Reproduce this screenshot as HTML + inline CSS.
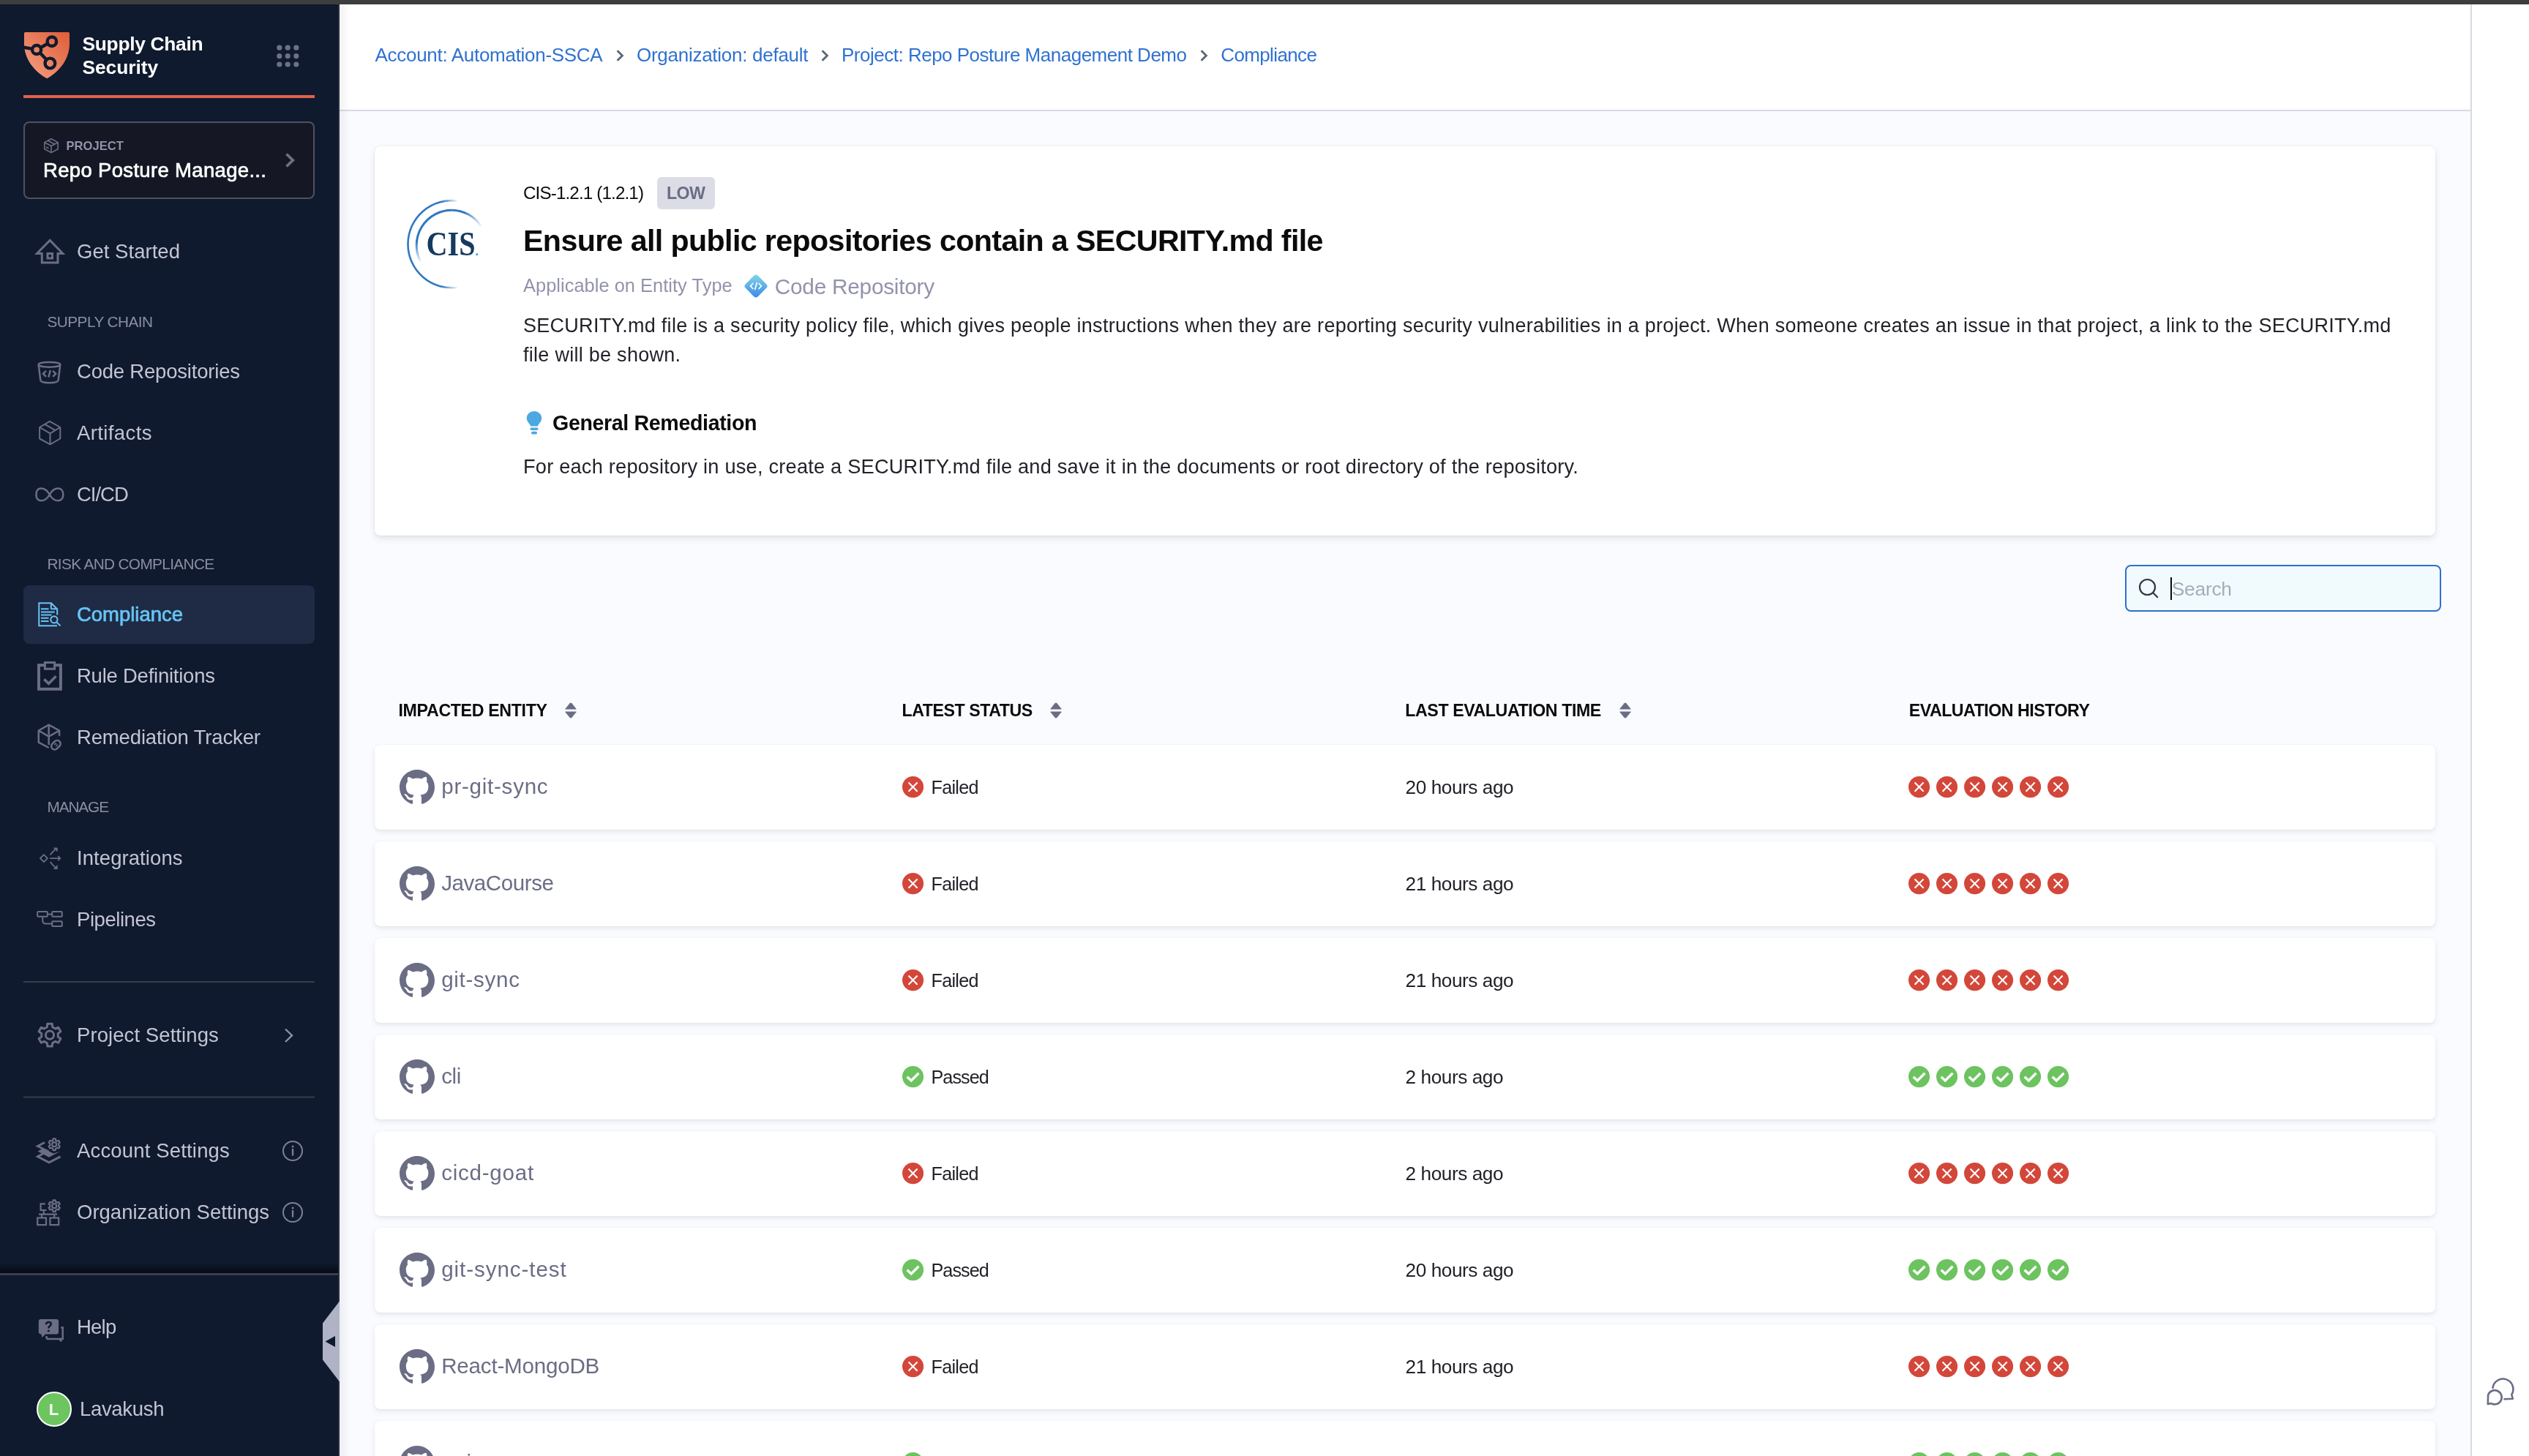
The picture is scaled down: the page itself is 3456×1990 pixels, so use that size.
<!DOCTYPE html><html><head><meta charset="utf-8"><title>Compliance</title><style>
*{margin:0;padding:0;box-sizing:border-box}
html,body{width:3456px;height:1990px;overflow:hidden;background:#fff}
#root{zoom:2;will-change:transform;position:relative;width:1728px;height:995px;overflow:hidden;font-family:"Liberation Sans",sans-serif;background:#fafbfe}
.t{position:absolute;white-space:nowrap;line-height:1}
@media (max-width: 2400px){html,body{width:1728px;height:995px}#root{zoom:1}}
</style></head><body><div id="root"><div style="position:absolute;left:0px;top:0px;width:1728px;height:3px;background:#3d3d3d;z-index:5"></div><div style="position:absolute;left:232px;top:0px;width:1456px;height:75px;background:#ffffff"></div><div style="position:absolute;left:232px;top:75px;width:1456px;height:1px;background:#d9dae5"></div><div style="position:absolute;left:232px;top:3px;width:7px;height:992px;background:linear-gradient(to right, rgba(20,20,40,0.06), rgba(20,20,40,0))"></div><div style="position:absolute;left:1688px;top:0px;width:40px;height:995px;background:#ffffff"></div><div style="position:absolute;left:1688px;top:3px;width:1px;height:992px;background:#d8d9e3"></div><svg style="position:absolute;left:1697px;top:939px;" width="24" height="24" viewBox="3394 1878 48 48"><path d="M3406.5,1897 A14,14 0 1 1 3432.3,1906 L3433.8,1911.8 L3422.5,1912.3" stroke="#6b6d85" stroke-width="2.6" fill="none" stroke-linejoin="round" stroke-linecap="round"/><path d="M3400.1,1906.5 A9.6,9.6 0 1 1 3404.3,1918.1 L3399.8,1919 Z" stroke="#6b6d85" stroke-width="2.6" fill="none" stroke-linejoin="round"/></svg><svg style="position:absolute;left:420.5px;top:34px;" width="6" height="8" viewBox="0 0 12 16"><path d="M2.6,1.3 L9.4,8 L2.6,14.7" stroke="#5b6878" stroke-width="2.9" fill="none"/></svg><svg style="position:absolute;left:560.5px;top:34px;" width="6" height="8" viewBox="0 0 12 16"><path d="M2.6,1.3 L9.4,8 L2.6,14.7" stroke="#5b6878" stroke-width="2.9" fill="none"/></svg><svg style="position:absolute;left:819.25px;top:34px;" width="6" height="8" viewBox="0 0 12 16"><path d="M2.6,1.3 L9.4,8 L2.6,14.7" stroke="#5b6878" stroke-width="2.9" fill="none"/></svg><div style="position:absolute;left:256px;top:100px;width:1408px;height:266px;background:#fff;border-radius:4px;box-shadow:0 0 1px rgba(40,41,61,0.08),0 2px 4px rgba(96,97,112,0.16)"></div><svg style="position:absolute;left:274px;top:132px;" width="64" height="68" viewBox="548 264 128 136"><defs><linearGradient id="cg1" x1="0" y1="0" x2="1" y2="0"><stop offset="0" stop-color="#2f78c0"/><stop offset="0.8" stop-color="#3d8fd0"/><stop offset="1" stop-color="#3d8fd0" stop-opacity="0"/></linearGradient></defs><defs><linearGradient id="ga1" gradientUnits="userSpaceOnUse" x1="585" y1="0" x2="626" y2="0"><stop offset="0.45" stop-color="#2f78c0"/><stop offset="1" stop-color="#2f78c0" stop-opacity="0"/></linearGradient><linearGradient id="ga2" gradientUnits="userSpaceOnUse" x1="0" y1="300" x2="0" y2="360"><stop offset="0.5" stop-color="#2f78c0"/><stop offset="1" stop-color="#2f78c0" stop-opacity="0"/></linearGradient><linearGradient id="ga3" gradientUnits="userSpaceOnUse" x1="615" y1="0" x2="659" y2="0"><stop offset="0.45" stop-color="#2f78c0"/><stop offset="1" stop-color="#2f78c0" stop-opacity="0"/></linearGradient></defs><path d="M625.5,274.7 A59.6,59.6 0 1 0 625.5,392.7" stroke="url(#ga1)" stroke-width="2.6" fill="none"/><path d="M617.2,287.2 A48,48 0 0 0 574.8,357.7" stroke="url(#ga2)" stroke-width="3" fill="none"/><path d="M657.5,309.1 A48,48 0 0 0 617.2,287.2" stroke="url(#ga3)" stroke-width="3" fill="none"/><rect x="672" y="264" width="4" height="136" fill="#fff"/><text x="582.5" y="349.1" font-family="Liberation Serif" font-weight="700" font-size="45.5" fill="#163a5f" textLength="67" lengthAdjust="spacingAndGlyphs">CIS</text><circle cx="651.8" cy="347.7" r="1.6" fill="#5aa0d8"/></svg><div style="position:absolute;left:449px;top:121px;width:39.25px;height:21.75px;background:#dcdce6;border-radius:3px"></div><svg style="position:absolute;left:508.3px;top:187.4px;" width="16" height="16" viewBox="0 0 32 32"><defs><linearGradient id="dg" x1="0" y1="0" x2="1" y2="1"><stop offset="0" stop-color="#86d8e6"/><stop offset="1" stop-color="#3a86ea"/></linearGradient></defs><rect x="4" y="4" width="24" height="24" rx="4" transform="rotate(45 16 16)" fill="url(#dg)"/><path d="M12.3,12 L8.6,16 L12.3,20 M19.7,12 L23.4,16 L19.7,20 M17.4,11 L14.6,21" stroke="#fff" stroke-width="1.7" fill="none"/></svg><svg style="position:absolute;left:359.5px;top:280.5px;" width="11" height="17" viewBox="719 561 22 34"><path d="M730,562 C735.8,562 740.2,566.3 740.2,571.5 C740.2,575.6 737.8,577.6 736.2,579.8 C735.5,580.8 735.2,581.5 735.2,582.5 H724.8 C724.8,581.5 724.5,580.8 723.8,579.8 C722.2,577.6 719.8,575.6 719.8,571.5 C719.8,566.3 724.2,562 730,562 Z" fill="#4ba8e0"/><rect x="724.5" y="584.5" width="11" height="3.4" rx="1.7" fill="#4ba8e0"/><rect x="726" y="589.8" width="8" height="3.8" rx="1.9" fill="#4ba8e0"/></svg><div style="position:absolute;left:1452px;top:386px;width:216px;height:31.75px;background:#f1fafd;border:1px solid #2f6fce;border-radius:4px"></div><svg style="position:absolute;left:1461px;top:395px;" width="14" height="14" viewBox="2922 790 28 28"><circle cx="2934.5" cy="802.5" r="10.5" stroke="#333640" stroke-width="2.2" fill="none"/><path d="M2942,810 L2948.8,816.8" stroke="#333640" stroke-width="2.2"/></svg><div style="position:absolute;left:1483px;top:394.5px;width:1px;height:15.25px;background:#0b0b0d"></div><svg style="position:absolute;left:386px;top:480px;" width="8" height="11" viewBox="0 0 16 22"><path d="M8,0.5 Q8.8,0.5 9.5,1.3 L15.5,8.8 Q16,9.5 15,9.5 H1 Q0,9.5 0.5,8.8 L6.5,1.3 Q7.2,0.5 8,0.5 Z" fill="#6b6d85"/><path d="M8,21.5 Q8.8,21.5 9.5,20.7 L15.5,13.2 Q16,12.5 15,12.5 H1 Q0,12.5 0.5,13.2 L6.5,20.7 Q7.2,21.5 8,21.5 Z" fill="#6b6d85"/></svg><svg style="position:absolute;left:717.5px;top:480px;" width="8" height="11" viewBox="0 0 16 22"><path d="M8,0.5 Q8.8,0.5 9.5,1.3 L15.5,8.8 Q16,9.5 15,9.5 H1 Q0,9.5 0.5,8.8 L6.5,1.3 Q7.2,0.5 8,0.5 Z" fill="#6b6d85"/><path d="M8,21.5 Q8.8,21.5 9.5,20.7 L15.5,13.2 Q16,12.5 15,12.5 H1 Q0,12.5 0.5,13.2 L6.5,20.7 Q7.2,21.5 8,21.5 Z" fill="#6b6d85"/></svg><svg style="position:absolute;left:1106.5px;top:480px;" width="8" height="11" viewBox="0 0 16 22"><path d="M8,0.5 Q8.8,0.5 9.5,1.3 L15.5,8.8 Q16,9.5 15,9.5 H1 Q0,9.5 0.5,8.8 L6.5,1.3 Q7.2,0.5 8,0.5 Z" fill="#6b6d85"/><path d="M8,21.5 Q8.8,21.5 9.5,20.7 L15.5,13.2 Q16,12.5 15,12.5 H1 Q0,12.5 0.5,13.2 L6.5,20.7 Q7.2,21.5 8,21.5 Z" fill="#6b6d85"/></svg><div class="t" style="left:256.25px;top:30.90px;font-size:13px;color:#3072d0;font-weight:400;letter-spacing:-0.147px;">Account: Automation-SSCA</div><div class="t" style="left:435.00px;top:30.90px;font-size:13px;color:#3072d0;font-weight:400;letter-spacing:-0.136px;">Organization: default</div><div class="t" style="left:575.00px;top:30.90px;font-size:13px;color:#3072d0;font-weight:400;letter-spacing:-0.249px;">Project: Repo Posture Management Demo</div><div class="t" style="left:834.15px;top:30.90px;font-size:13px;color:#3072d0;font-weight:400;letter-spacing:-0.317px;">Compliance</div><div class="t" style="left:357.50px;top:125.76px;font-size:12.1px;color:#0b0b0d;font-weight:400;letter-spacing:-0.432px;">CIS-1.2.1 (1.2.1)</div><div class="t" style="left:455.50px;top:126.58px;font-size:11.6px;color:#6b6d85;font-weight:700;letter-spacing:-0.273px;">LOW</div><div class="t" style="left:357.50px;top:154.46px;font-size:20.6px;color:#0b0b0d;font-weight:700;letter-spacing:-0.311px;">Ensure all public repositories contain a SECURITY.md file</div><div class="t" style="left:357.50px;top:188.85px;font-size:12.7px;color:#9293ab;font-weight:400;letter-spacing:0.021px;">Applicable on Entity Type</div><div class="t" style="left:529.40px;top:188.39px;font-size:14.9px;color:#9293ab;font-weight:400;letter-spacing:-0.130px;">Code Repository</div><div class="t" style="left:357.50px;top:215.82px;font-size:13.5px;color:#22222a;font-weight:400;letter-spacing:0.137px;">SECURITY.md file is a security policy file, which gives people instructions when they are reporting security vulnerabilities in a project. When someone creates an issue in that project, a link to the SECURITY.md</div><div class="t" style="left:357.50px;top:236.07px;font-size:13.5px;color:#22222a;font-weight:400;letter-spacing:0.137px;">file will be shown.</div><div class="t" style="left:377.50px;top:281.90px;font-size:14.3px;color:#0b0b0d;font-weight:700;letter-spacing:-0.181px;">General Remediation</div><div class="t" style="left:357.50px;top:311.99px;font-size:13.6px;color:#22222a;font-weight:400;letter-spacing:0.108px;">For each repository in use, create a SECURITY.md file and save it in the documents or root directory of the repository.</div><div class="t" style="left:1483.90px;top:395.93px;font-size:13.2px;color:#a5adb8;font-weight:400;letter-spacing:-0.139px;">Search</div><div class="t" style="left:272.25px;top:479.93px;font-size:11.6px;color:#0b0b0d;font-weight:700;letter-spacing:-0.171px;">IMPACTED ENTITY</div><div class="t" style="left:616.25px;top:479.93px;font-size:11.6px;color:#0b0b0d;font-weight:700;letter-spacing:-0.226px;">LATEST STATUS</div><div class="t" style="left:960.15px;top:479.93px;font-size:11.6px;color:#0b0b0d;font-weight:700;letter-spacing:-0.213px;">LAST EVALUATION TIME</div><div class="t" style="left:1304.35px;top:479.93px;font-size:11.6px;color:#0b0b0d;font-weight:700;letter-spacing:-0.245px;">EVALUATION HISTORY</div><div style="position:absolute;left:256px;top:509px;width:1408px;height:58px;background:#fff;border-radius:4px;box-shadow:0 0 1px rgba(40,41,61,0.05),0 1.5px 3px rgba(96,97,112,0.13)"></div><svg style="position:absolute;left:273px;top:526px;" width="24" height="24" viewBox="0 0 16 16"><path fill="#6b6d85" d="M8 0C3.58 0 0 3.58 0 8c0 3.54 2.29 6.53 5.47 7.59.4.07.55-.17.55-.38 0-.19-.01-.82-.01-1.49-2.01.37-2.53-.49-2.69-.94-.09-.23-.48-.94-.82-1.13-.28-.15-.68-.52-.01-.53.63-.01 1.08.58 1.23.82.72 1.21 1.87.87 2.33.66.07-.52.28-.87.51-1.07-1.78-.2-3.64-.89-3.64-3.95 0-.87.31-1.59.82-2.15-.08-.2-.36-1.02.08-2.12 0 0 .67-.21 2.2.82.64-.18 1.32-.27 2-.27.68 0 1.36.09 2 .27 1.53-1.04 2.2-.82 2.2-.82.44 1.1.16 1.92.08 2.12.51.56.82 1.27.82 2.15 0 3.07-1.87 3.75-3.65 3.95.29.25.54.73.54 1.48 0 1.07-.01 1.93-.01 2.2 0 .21.15.46.55.38A8.013 8.013 0 0016 8c0-4.42-3.58-8-8-8z"/></svg><div class="t" style="left:301.60px;top:530.22px;font-size:14.8px;color:#6b6d85;font-weight:400;letter-spacing:0.367px;">pr-git-sync</div><svg style="position:absolute;left:616.6px;top:530.7px;" width="14.6" height="14.6" viewBox="0 0 29 29"><circle cx="14.5" cy="14.5" r="14.5" fill="#d3473a"/><path d="M8.5,8.5 L20.5,20.5 M20.5,8.5 L8.5,20.5" stroke="#fff" stroke-width="2.1"/></svg><div class="t" style="left:636.25px;top:532.03px;font-size:12.6px;color:#22222a;font-weight:400;letter-spacing:-0.362px;">Failed</div><div class="t" style="left:960.30px;top:531.61px;font-size:13.1px;color:#22222a;font-weight:400;letter-spacing:-0.223px;">20 hours ago</div><svg style="position:absolute;left:1303.75px;top:530.7px;" width="14.6" height="14.6" viewBox="0 0 29 29"><circle cx="14.5" cy="14.5" r="14.5" fill="#d3473a"/><path d="M8.5,8.5 L20.5,20.5 M20.5,8.5 L8.5,20.5" stroke="#fff" stroke-width="2.1"/></svg><svg style="position:absolute;left:1322.8px;top:530.7px;" width="14.6" height="14.6" viewBox="0 0 29 29"><circle cx="14.5" cy="14.5" r="14.5" fill="#d3473a"/><path d="M8.5,8.5 L20.5,20.5 M20.5,8.5 L8.5,20.5" stroke="#fff" stroke-width="2.1"/></svg><svg style="position:absolute;left:1341.85px;top:530.7px;" width="14.6" height="14.6" viewBox="0 0 29 29"><circle cx="14.5" cy="14.5" r="14.5" fill="#d3473a"/><path d="M8.5,8.5 L20.5,20.5 M20.5,8.5 L8.5,20.5" stroke="#fff" stroke-width="2.1"/></svg><svg style="position:absolute;left:1360.9px;top:530.7px;" width="14.6" height="14.6" viewBox="0 0 29 29"><circle cx="14.5" cy="14.5" r="14.5" fill="#d3473a"/><path d="M8.5,8.5 L20.5,20.5 M20.5,8.5 L8.5,20.5" stroke="#fff" stroke-width="2.1"/></svg><svg style="position:absolute;left:1379.95px;top:530.7px;" width="14.6" height="14.6" viewBox="0 0 29 29"><circle cx="14.5" cy="14.5" r="14.5" fill="#d3473a"/><path d="M8.5,8.5 L20.5,20.5 M20.5,8.5 L8.5,20.5" stroke="#fff" stroke-width="2.1"/></svg><svg style="position:absolute;left:1399.0px;top:530.7px;" width="14.6" height="14.6" viewBox="0 0 29 29"><circle cx="14.5" cy="14.5" r="14.5" fill="#d3473a"/><path d="M8.5,8.5 L20.5,20.5 M20.5,8.5 L8.5,20.5" stroke="#fff" stroke-width="2.1"/></svg><div style="position:absolute;left:256px;top:575px;width:1408px;height:58px;background:#fff;border-radius:4px;box-shadow:0 0 1px rgba(40,41,61,0.05),0 1.5px 3px rgba(96,97,112,0.13)"></div><svg style="position:absolute;left:273px;top:592px;" width="24" height="24" viewBox="0 0 16 16"><path fill="#6b6d85" d="M8 0C3.58 0 0 3.58 0 8c0 3.54 2.29 6.53 5.47 7.59.4.07.55-.17.55-.38 0-.19-.01-.82-.01-1.49-2.01.37-2.53-.49-2.69-.94-.09-.23-.48-.94-.82-1.13-.28-.15-.68-.52-.01-.53.63-.01 1.08.58 1.23.82.72 1.21 1.87.87 2.33.66.07-.52.28-.87.51-1.07-1.78-.2-3.64-.89-3.64-3.95 0-.87.31-1.59.82-2.15-.08-.2-.36-1.02.08-2.12 0 0 .67-.21 2.2.82.64-.18 1.32-.27 2-.27.68 0 1.36.09 2 .27 1.53-1.04 2.2-.82 2.2-.82.44 1.1.16 1.92.08 2.12.51.56.82 1.27.82 2.15 0 3.07-1.87 3.75-3.65 3.95.29.25.54.73.54 1.48 0 1.07-.01 1.93-.01 2.2 0 .21.15.46.55.38A8.013 8.013 0 0016 8c0-4.42-3.58-8-8-8z"/></svg><div class="t" style="left:301.60px;top:596.22px;font-size:14.8px;color:#6b6d85;font-weight:400;letter-spacing:-0.230px;">JavaCourse</div><svg style="position:absolute;left:616.6px;top:596.7px;" width="14.6" height="14.6" viewBox="0 0 29 29"><circle cx="14.5" cy="14.5" r="14.5" fill="#d3473a"/><path d="M8.5,8.5 L20.5,20.5 M20.5,8.5 L8.5,20.5" stroke="#fff" stroke-width="2.1"/></svg><div class="t" style="left:636.25px;top:598.03px;font-size:12.6px;color:#22222a;font-weight:400;letter-spacing:-0.362px;">Failed</div><div class="t" style="left:960.30px;top:597.61px;font-size:13.1px;color:#22222a;font-weight:400;letter-spacing:-0.223px;">21 hours ago</div><svg style="position:absolute;left:1303.75px;top:596.7px;" width="14.6" height="14.6" viewBox="0 0 29 29"><circle cx="14.5" cy="14.5" r="14.5" fill="#d3473a"/><path d="M8.5,8.5 L20.5,20.5 M20.5,8.5 L8.5,20.5" stroke="#fff" stroke-width="2.1"/></svg><svg style="position:absolute;left:1322.8px;top:596.7px;" width="14.6" height="14.6" viewBox="0 0 29 29"><circle cx="14.5" cy="14.5" r="14.5" fill="#d3473a"/><path d="M8.5,8.5 L20.5,20.5 M20.5,8.5 L8.5,20.5" stroke="#fff" stroke-width="2.1"/></svg><svg style="position:absolute;left:1341.85px;top:596.7px;" width="14.6" height="14.6" viewBox="0 0 29 29"><circle cx="14.5" cy="14.5" r="14.5" fill="#d3473a"/><path d="M8.5,8.5 L20.5,20.5 M20.5,8.5 L8.5,20.5" stroke="#fff" stroke-width="2.1"/></svg><svg style="position:absolute;left:1360.9px;top:596.7px;" width="14.6" height="14.6" viewBox="0 0 29 29"><circle cx="14.5" cy="14.5" r="14.5" fill="#d3473a"/><path d="M8.5,8.5 L20.5,20.5 M20.5,8.5 L8.5,20.5" stroke="#fff" stroke-width="2.1"/></svg><svg style="position:absolute;left:1379.95px;top:596.7px;" width="14.6" height="14.6" viewBox="0 0 29 29"><circle cx="14.5" cy="14.5" r="14.5" fill="#d3473a"/><path d="M8.5,8.5 L20.5,20.5 M20.5,8.5 L8.5,20.5" stroke="#fff" stroke-width="2.1"/></svg><svg style="position:absolute;left:1399.0px;top:596.7px;" width="14.6" height="14.6" viewBox="0 0 29 29"><circle cx="14.5" cy="14.5" r="14.5" fill="#d3473a"/><path d="M8.5,8.5 L20.5,20.5 M20.5,8.5 L8.5,20.5" stroke="#fff" stroke-width="2.1"/></svg><div style="position:absolute;left:256px;top:641px;width:1408px;height:58px;background:#fff;border-radius:4px;box-shadow:0 0 1px rgba(40,41,61,0.05),0 1.5px 3px rgba(96,97,112,0.13)"></div><svg style="position:absolute;left:273px;top:658px;" width="24" height="24" viewBox="0 0 16 16"><path fill="#6b6d85" d="M8 0C3.58 0 0 3.58 0 8c0 3.54 2.29 6.53 5.47 7.59.4.07.55-.17.55-.38 0-.19-.01-.82-.01-1.49-2.01.37-2.53-.49-2.69-.94-.09-.23-.48-.94-.82-1.13-.28-.15-.68-.52-.01-.53.63-.01 1.08.58 1.23.82.72 1.21 1.87.87 2.33.66.07-.52.28-.87.51-1.07-1.78-.2-3.64-.89-3.64-3.95 0-.87.31-1.59.82-2.15-.08-.2-.36-1.02.08-2.12 0 0 .67-.21 2.2.82.64-.18 1.32-.27 2-.27.68 0 1.36.09 2 .27 1.53-1.04 2.2-.82 2.2-.82.44 1.1.16 1.92.08 2.12.51.56.82 1.27.82 2.15 0 3.07-1.87 3.75-3.65 3.95.29.25.54.73.54 1.48 0 1.07-.01 1.93-.01 2.2 0 .21.15.46.55.38A8.013 8.013 0 0016 8c0-4.42-3.58-8-8-8z"/></svg><div class="t" style="left:301.60px;top:662.22px;font-size:14.8px;color:#6b6d85;font-weight:400;letter-spacing:0.345px;">git-sync</div><svg style="position:absolute;left:616.6px;top:662.7px;" width="14.6" height="14.6" viewBox="0 0 29 29"><circle cx="14.5" cy="14.5" r="14.5" fill="#d3473a"/><path d="M8.5,8.5 L20.5,20.5 M20.5,8.5 L8.5,20.5" stroke="#fff" stroke-width="2.1"/></svg><div class="t" style="left:636.25px;top:664.03px;font-size:12.6px;color:#22222a;font-weight:400;letter-spacing:-0.362px;">Failed</div><div class="t" style="left:960.30px;top:663.61px;font-size:13.1px;color:#22222a;font-weight:400;letter-spacing:-0.223px;">21 hours ago</div><svg style="position:absolute;left:1303.75px;top:662.7px;" width="14.6" height="14.6" viewBox="0 0 29 29"><circle cx="14.5" cy="14.5" r="14.5" fill="#d3473a"/><path d="M8.5,8.5 L20.5,20.5 M20.5,8.5 L8.5,20.5" stroke="#fff" stroke-width="2.1"/></svg><svg style="position:absolute;left:1322.8px;top:662.7px;" width="14.6" height="14.6" viewBox="0 0 29 29"><circle cx="14.5" cy="14.5" r="14.5" fill="#d3473a"/><path d="M8.5,8.5 L20.5,20.5 M20.5,8.5 L8.5,20.5" stroke="#fff" stroke-width="2.1"/></svg><svg style="position:absolute;left:1341.85px;top:662.7px;" width="14.6" height="14.6" viewBox="0 0 29 29"><circle cx="14.5" cy="14.5" r="14.5" fill="#d3473a"/><path d="M8.5,8.5 L20.5,20.5 M20.5,8.5 L8.5,20.5" stroke="#fff" stroke-width="2.1"/></svg><svg style="position:absolute;left:1360.9px;top:662.7px;" width="14.6" height="14.6" viewBox="0 0 29 29"><circle cx="14.5" cy="14.5" r="14.5" fill="#d3473a"/><path d="M8.5,8.5 L20.5,20.5 M20.5,8.5 L8.5,20.5" stroke="#fff" stroke-width="2.1"/></svg><svg style="position:absolute;left:1379.95px;top:662.7px;" width="14.6" height="14.6" viewBox="0 0 29 29"><circle cx="14.5" cy="14.5" r="14.5" fill="#d3473a"/><path d="M8.5,8.5 L20.5,20.5 M20.5,8.5 L8.5,20.5" stroke="#fff" stroke-width="2.1"/></svg><svg style="position:absolute;left:1399.0px;top:662.7px;" width="14.6" height="14.6" viewBox="0 0 29 29"><circle cx="14.5" cy="14.5" r="14.5" fill="#d3473a"/><path d="M8.5,8.5 L20.5,20.5 M20.5,8.5 L8.5,20.5" stroke="#fff" stroke-width="2.1"/></svg><div style="position:absolute;left:256px;top:707px;width:1408px;height:58px;background:#fff;border-radius:4px;box-shadow:0 0 1px rgba(40,41,61,0.05),0 1.5px 3px rgba(96,97,112,0.13)"></div><svg style="position:absolute;left:273px;top:724px;" width="24" height="24" viewBox="0 0 16 16"><path fill="#6b6d85" d="M8 0C3.58 0 0 3.58 0 8c0 3.54 2.29 6.53 5.47 7.59.4.07.55-.17.55-.38 0-.19-.01-.82-.01-1.49-2.01.37-2.53-.49-2.69-.94-.09-.23-.48-.94-.82-1.13-.28-.15-.68-.52-.01-.53.63-.01 1.08.58 1.23.82.72 1.21 1.87.87 2.33.66.07-.52.28-.87.51-1.07-1.78-.2-3.64-.89-3.64-3.95 0-.87.31-1.59.82-2.15-.08-.2-.36-1.02.08-2.12 0 0 .67-.21 2.2.82.64-.18 1.32-.27 2-.27.68 0 1.36.09 2 .27 1.53-1.04 2.2-.82 2.2-.82.44 1.1.16 1.92.08 2.12.51.56.82 1.27.82 2.15 0 3.07-1.87 3.75-3.65 3.95.29.25.54.73.54 1.48 0 1.07-.01 1.93-.01 2.2 0 .21.15.46.55.38A8.013 8.013 0 0016 8c0-4.42-3.58-8-8-8z"/></svg><div class="t" style="left:301.60px;top:728.22px;font-size:14.8px;color:#6b6d85;font-weight:400;letter-spacing:-0.192px;">cli</div><svg style="position:absolute;left:616.6px;top:728.7px;" width="14.6" height="14.6" viewBox="0 0 29 29"><circle cx="14.5" cy="14.5" r="14.5" fill="#6cc35f"/><path d="M6.6,14.6 L12.2,19.8 L22.3,9.7" stroke="#fff" stroke-width="3.4" fill="none" stroke-linejoin="miter"/></svg><div class="t" style="left:636.25px;top:730.03px;font-size:12.6px;color:#22222a;font-weight:400;letter-spacing:-0.463px;">Passed</div><div class="t" style="left:960.30px;top:729.61px;font-size:13.1px;color:#22222a;font-weight:400;letter-spacing:-0.223px;">2 hours ago</div><svg style="position:absolute;left:1303.75px;top:728.7px;" width="14.6" height="14.6" viewBox="0 0 29 29"><circle cx="14.5" cy="14.5" r="14.5" fill="#6cc35f"/><path d="M6.6,14.6 L12.2,19.8 L22.3,9.7" stroke="#fff" stroke-width="3.4" fill="none" stroke-linejoin="miter"/></svg><svg style="position:absolute;left:1322.8px;top:728.7px;" width="14.6" height="14.6" viewBox="0 0 29 29"><circle cx="14.5" cy="14.5" r="14.5" fill="#6cc35f"/><path d="M6.6,14.6 L12.2,19.8 L22.3,9.7" stroke="#fff" stroke-width="3.4" fill="none" stroke-linejoin="miter"/></svg><svg style="position:absolute;left:1341.85px;top:728.7px;" width="14.6" height="14.6" viewBox="0 0 29 29"><circle cx="14.5" cy="14.5" r="14.5" fill="#6cc35f"/><path d="M6.6,14.6 L12.2,19.8 L22.3,9.7" stroke="#fff" stroke-width="3.4" fill="none" stroke-linejoin="miter"/></svg><svg style="position:absolute;left:1360.9px;top:728.7px;" width="14.6" height="14.6" viewBox="0 0 29 29"><circle cx="14.5" cy="14.5" r="14.5" fill="#6cc35f"/><path d="M6.6,14.6 L12.2,19.8 L22.3,9.7" stroke="#fff" stroke-width="3.4" fill="none" stroke-linejoin="miter"/></svg><svg style="position:absolute;left:1379.95px;top:728.7px;" width="14.6" height="14.6" viewBox="0 0 29 29"><circle cx="14.5" cy="14.5" r="14.5" fill="#6cc35f"/><path d="M6.6,14.6 L12.2,19.8 L22.3,9.7" stroke="#fff" stroke-width="3.4" fill="none" stroke-linejoin="miter"/></svg><svg style="position:absolute;left:1399.0px;top:728.7px;" width="14.6" height="14.6" viewBox="0 0 29 29"><circle cx="14.5" cy="14.5" r="14.5" fill="#6cc35f"/><path d="M6.6,14.6 L12.2,19.8 L22.3,9.7" stroke="#fff" stroke-width="3.4" fill="none" stroke-linejoin="miter"/></svg><div style="position:absolute;left:256px;top:773px;width:1408px;height:58px;background:#fff;border-radius:4px;box-shadow:0 0 1px rgba(40,41,61,0.05),0 1.5px 3px rgba(96,97,112,0.13)"></div><svg style="position:absolute;left:273px;top:790px;" width="24" height="24" viewBox="0 0 16 16"><path fill="#6b6d85" d="M8 0C3.58 0 0 3.58 0 8c0 3.54 2.29 6.53 5.47 7.59.4.07.55-.17.55-.38 0-.19-.01-.82-.01-1.49-2.01.37-2.53-.49-2.69-.94-.09-.23-.48-.94-.82-1.13-.28-.15-.68-.52-.01-.53.63-.01 1.08.58 1.23.82.72 1.21 1.87.87 2.33.66.07-.52.28-.87.51-1.07-1.78-.2-3.64-.89-3.64-3.95 0-.87.31-1.59.82-2.15-.08-.2-.36-1.02.08-2.12 0 0 .67-.21 2.2.82.64-.18 1.32-.27 2-.27.68 0 1.36.09 2 .27 1.53-1.04 2.2-.82 2.2-.82.44 1.1.16 1.92.08 2.12.51.56.82 1.27.82 2.15 0 3.07-1.87 3.75-3.65 3.95.29.25.54.73.54 1.48 0 1.07-.01 1.93-.01 2.2 0 .21.15.46.55.38A8.013 8.013 0 0016 8c0-4.42-3.58-8-8-8z"/></svg><div class="t" style="left:301.60px;top:794.22px;font-size:14.8px;color:#6b6d85;font-weight:400;letter-spacing:0.369px;">cicd-goat</div><svg style="position:absolute;left:616.6px;top:794.7px;" width="14.6" height="14.6" viewBox="0 0 29 29"><circle cx="14.5" cy="14.5" r="14.5" fill="#d3473a"/><path d="M8.5,8.5 L20.5,20.5 M20.5,8.5 L8.5,20.5" stroke="#fff" stroke-width="2.1"/></svg><div class="t" style="left:636.25px;top:796.03px;font-size:12.6px;color:#22222a;font-weight:400;letter-spacing:-0.362px;">Failed</div><div class="t" style="left:960.30px;top:795.61px;font-size:13.1px;color:#22222a;font-weight:400;letter-spacing:-0.223px;">2 hours ago</div><svg style="position:absolute;left:1303.75px;top:794.7px;" width="14.6" height="14.6" viewBox="0 0 29 29"><circle cx="14.5" cy="14.5" r="14.5" fill="#d3473a"/><path d="M8.5,8.5 L20.5,20.5 M20.5,8.5 L8.5,20.5" stroke="#fff" stroke-width="2.1"/></svg><svg style="position:absolute;left:1322.8px;top:794.7px;" width="14.6" height="14.6" viewBox="0 0 29 29"><circle cx="14.5" cy="14.5" r="14.5" fill="#d3473a"/><path d="M8.5,8.5 L20.5,20.5 M20.5,8.5 L8.5,20.5" stroke="#fff" stroke-width="2.1"/></svg><svg style="position:absolute;left:1341.85px;top:794.7px;" width="14.6" height="14.6" viewBox="0 0 29 29"><circle cx="14.5" cy="14.5" r="14.5" fill="#d3473a"/><path d="M8.5,8.5 L20.5,20.5 M20.5,8.5 L8.5,20.5" stroke="#fff" stroke-width="2.1"/></svg><svg style="position:absolute;left:1360.9px;top:794.7px;" width="14.6" height="14.6" viewBox="0 0 29 29"><circle cx="14.5" cy="14.5" r="14.5" fill="#d3473a"/><path d="M8.5,8.5 L20.5,20.5 M20.5,8.5 L8.5,20.5" stroke="#fff" stroke-width="2.1"/></svg><svg style="position:absolute;left:1379.95px;top:794.7px;" width="14.6" height="14.6" viewBox="0 0 29 29"><circle cx="14.5" cy="14.5" r="14.5" fill="#d3473a"/><path d="M8.5,8.5 L20.5,20.5 M20.5,8.5 L8.5,20.5" stroke="#fff" stroke-width="2.1"/></svg><svg style="position:absolute;left:1399.0px;top:794.7px;" width="14.6" height="14.6" viewBox="0 0 29 29"><circle cx="14.5" cy="14.5" r="14.5" fill="#d3473a"/><path d="M8.5,8.5 L20.5,20.5 M20.5,8.5 L8.5,20.5" stroke="#fff" stroke-width="2.1"/></svg><div style="position:absolute;left:256px;top:839px;width:1408px;height:58px;background:#fff;border-radius:4px;box-shadow:0 0 1px rgba(40,41,61,0.05),0 1.5px 3px rgba(96,97,112,0.13)"></div><svg style="position:absolute;left:273px;top:856px;" width="24" height="24" viewBox="0 0 16 16"><path fill="#6b6d85" d="M8 0C3.58 0 0 3.58 0 8c0 3.54 2.29 6.53 5.47 7.59.4.07.55-.17.55-.38 0-.19-.01-.82-.01-1.49-2.01.37-2.53-.49-2.69-.94-.09-.23-.48-.94-.82-1.13-.28-.15-.68-.52-.01-.53.63-.01 1.08.58 1.23.82.72 1.21 1.87.87 2.33.66.07-.52.28-.87.51-1.07-1.78-.2-3.64-.89-3.64-3.95 0-.87.31-1.59.82-2.15-.08-.2-.36-1.02.08-2.12 0 0 .67-.21 2.2.82.64-.18 1.32-.27 2-.27.68 0 1.36.09 2 .27 1.53-1.04 2.2-.82 2.2-.82.44 1.1.16 1.92.08 2.12.51.56.82 1.27.82 2.15 0 3.07-1.87 3.75-3.65 3.95.29.25.54.73.54 1.48 0 1.07-.01 1.93-.01 2.2 0 .21.15.46.55.38A8.013 8.013 0 0016 8c0-4.42-3.58-8-8-8z"/></svg><div class="t" style="left:301.60px;top:860.22px;font-size:14.8px;color:#6b6d85;font-weight:400;letter-spacing:0.461px;">git-sync-test</div><svg style="position:absolute;left:616.6px;top:860.7px;" width="14.6" height="14.6" viewBox="0 0 29 29"><circle cx="14.5" cy="14.5" r="14.5" fill="#6cc35f"/><path d="M6.6,14.6 L12.2,19.8 L22.3,9.7" stroke="#fff" stroke-width="3.4" fill="none" stroke-linejoin="miter"/></svg><div class="t" style="left:636.25px;top:862.03px;font-size:12.6px;color:#22222a;font-weight:400;letter-spacing:-0.463px;">Passed</div><div class="t" style="left:960.30px;top:861.61px;font-size:13.1px;color:#22222a;font-weight:400;letter-spacing:-0.223px;">20 hours ago</div><svg style="position:absolute;left:1303.75px;top:860.7px;" width="14.6" height="14.6" viewBox="0 0 29 29"><circle cx="14.5" cy="14.5" r="14.5" fill="#6cc35f"/><path d="M6.6,14.6 L12.2,19.8 L22.3,9.7" stroke="#fff" stroke-width="3.4" fill="none" stroke-linejoin="miter"/></svg><svg style="position:absolute;left:1322.8px;top:860.7px;" width="14.6" height="14.6" viewBox="0 0 29 29"><circle cx="14.5" cy="14.5" r="14.5" fill="#6cc35f"/><path d="M6.6,14.6 L12.2,19.8 L22.3,9.7" stroke="#fff" stroke-width="3.4" fill="none" stroke-linejoin="miter"/></svg><svg style="position:absolute;left:1341.85px;top:860.7px;" width="14.6" height="14.6" viewBox="0 0 29 29"><circle cx="14.5" cy="14.5" r="14.5" fill="#6cc35f"/><path d="M6.6,14.6 L12.2,19.8 L22.3,9.7" stroke="#fff" stroke-width="3.4" fill="none" stroke-linejoin="miter"/></svg><svg style="position:absolute;left:1360.9px;top:860.7px;" width="14.6" height="14.6" viewBox="0 0 29 29"><circle cx="14.5" cy="14.5" r="14.5" fill="#6cc35f"/><path d="M6.6,14.6 L12.2,19.8 L22.3,9.7" stroke="#fff" stroke-width="3.4" fill="none" stroke-linejoin="miter"/></svg><svg style="position:absolute;left:1379.95px;top:860.7px;" width="14.6" height="14.6" viewBox="0 0 29 29"><circle cx="14.5" cy="14.5" r="14.5" fill="#6cc35f"/><path d="M6.6,14.6 L12.2,19.8 L22.3,9.7" stroke="#fff" stroke-width="3.4" fill="none" stroke-linejoin="miter"/></svg><svg style="position:absolute;left:1399.0px;top:860.7px;" width="14.6" height="14.6" viewBox="0 0 29 29"><circle cx="14.5" cy="14.5" r="14.5" fill="#6cc35f"/><path d="M6.6,14.6 L12.2,19.8 L22.3,9.7" stroke="#fff" stroke-width="3.4" fill="none" stroke-linejoin="miter"/></svg><div style="position:absolute;left:256px;top:905px;width:1408px;height:58px;background:#fff;border-radius:4px;box-shadow:0 0 1px rgba(40,41,61,0.05),0 1.5px 3px rgba(96,97,112,0.13)"></div><svg style="position:absolute;left:273px;top:922px;" width="24" height="24" viewBox="0 0 16 16"><path fill="#6b6d85" d="M8 0C3.58 0 0 3.58 0 8c0 3.54 2.29 6.53 5.47 7.59.4.07.55-.17.55-.38 0-.19-.01-.82-.01-1.49-2.01.37-2.53-.49-2.69-.94-.09-.23-.48-.94-.82-1.13-.28-.15-.68-.52-.01-.53.63-.01 1.08.58 1.23.82.72 1.21 1.87.87 2.33.66.07-.52.28-.87.51-1.07-1.78-.2-3.64-.89-3.64-3.95 0-.87.31-1.59.82-2.15-.08-.2-.36-1.02.08-2.12 0 0 .67-.21 2.2.82.64-.18 1.32-.27 2-.27.68 0 1.36.09 2 .27 1.53-1.04 2.2-.82 2.2-.82.44 1.1.16 1.92.08 2.12.51.56.82 1.27.82 2.15 0 3.07-1.87 3.75-3.65 3.95.29.25.54.73.54 1.48 0 1.07-.01 1.93-.01 2.2 0 .21.15.46.55.38A8.013 8.013 0 0016 8c0-4.42-3.58-8-8-8z"/></svg><div class="t" style="left:301.60px;top:926.22px;font-size:14.8px;color:#6b6d85;font-weight:400;letter-spacing:-0.108px;">React-MongoDB</div><svg style="position:absolute;left:616.6px;top:926.7px;" width="14.6" height="14.6" viewBox="0 0 29 29"><circle cx="14.5" cy="14.5" r="14.5" fill="#d3473a"/><path d="M8.5,8.5 L20.5,20.5 M20.5,8.5 L8.5,20.5" stroke="#fff" stroke-width="2.1"/></svg><div class="t" style="left:636.25px;top:928.03px;font-size:12.6px;color:#22222a;font-weight:400;letter-spacing:-0.362px;">Failed</div><div class="t" style="left:960.30px;top:927.61px;font-size:13.1px;color:#22222a;font-weight:400;letter-spacing:-0.223px;">21 hours ago</div><svg style="position:absolute;left:1303.75px;top:926.7px;" width="14.6" height="14.6" viewBox="0 0 29 29"><circle cx="14.5" cy="14.5" r="14.5" fill="#d3473a"/><path d="M8.5,8.5 L20.5,20.5 M20.5,8.5 L8.5,20.5" stroke="#fff" stroke-width="2.1"/></svg><svg style="position:absolute;left:1322.8px;top:926.7px;" width="14.6" height="14.6" viewBox="0 0 29 29"><circle cx="14.5" cy="14.5" r="14.5" fill="#d3473a"/><path d="M8.5,8.5 L20.5,20.5 M20.5,8.5 L8.5,20.5" stroke="#fff" stroke-width="2.1"/></svg><svg style="position:absolute;left:1341.85px;top:926.7px;" width="14.6" height="14.6" viewBox="0 0 29 29"><circle cx="14.5" cy="14.5" r="14.5" fill="#d3473a"/><path d="M8.5,8.5 L20.5,20.5 M20.5,8.5 L8.5,20.5" stroke="#fff" stroke-width="2.1"/></svg><svg style="position:absolute;left:1360.9px;top:926.7px;" width="14.6" height="14.6" viewBox="0 0 29 29"><circle cx="14.5" cy="14.5" r="14.5" fill="#d3473a"/><path d="M8.5,8.5 L20.5,20.5 M20.5,8.5 L8.5,20.5" stroke="#fff" stroke-width="2.1"/></svg><svg style="position:absolute;left:1379.95px;top:926.7px;" width="14.6" height="14.6" viewBox="0 0 29 29"><circle cx="14.5" cy="14.5" r="14.5" fill="#d3473a"/><path d="M8.5,8.5 L20.5,20.5 M20.5,8.5 L8.5,20.5" stroke="#fff" stroke-width="2.1"/></svg><svg style="position:absolute;left:1399.0px;top:926.7px;" width="14.6" height="14.6" viewBox="0 0 29 29"><circle cx="14.5" cy="14.5" r="14.5" fill="#d3473a"/><path d="M8.5,8.5 L20.5,20.5 M20.5,8.5 L8.5,20.5" stroke="#fff" stroke-width="2.1"/></svg><div style="position:absolute;left:256px;top:971px;width:1408px;height:58px;background:#fff;border-radius:4px;box-shadow:0 0 1px rgba(40,41,61,0.05),0 1.5px 3px rgba(96,97,112,0.13)"></div><svg style="position:absolute;left:273px;top:988px;" width="24" height="24" viewBox="0 0 16 16"><path fill="#6b6d85" d="M8 0C3.58 0 0 3.58 0 8c0 3.54 2.29 6.53 5.47 7.59.4.07.55-.17.55-.38 0-.19-.01-.82-.01-1.49-2.01.37-2.53-.49-2.69-.94-.09-.23-.48-.94-.82-1.13-.28-.15-.68-.52-.01-.53.63-.01 1.08.58 1.23.82.72 1.21 1.87.87 2.33.66.07-.52.28-.87.51-1.07-1.78-.2-3.64-.89-3.64-3.95 0-.87.31-1.59.82-2.15-.08-.2-.36-1.02.08-2.12 0 0 .67-.21 2.2.82.64-.18 1.32-.27 2-.27.68 0 1.36.09 2 .27 1.53-1.04 2.2-.82 2.2-.82.44 1.1.16 1.92.08 2.12.51.56.82 1.27.82 2.15 0 3.07-1.87 3.75-3.65 3.95.29.25.54.73.54 1.48 0 1.07-.01 1.93-.01 2.2 0 .21.15.46.55.38A8.013 8.013 0 0016 8c0-4.42-3.58-8-8-8z"/></svg><div class="t" style="left:301.60px;top:992.22px;font-size:14.8px;color:#6b6d85;font-weight:400;letter-spacing:0.350px;">api-server</div><svg style="position:absolute;left:616.6px;top:992.7px;" width="14.6" height="14.6" viewBox="0 0 29 29"><circle cx="14.5" cy="14.5" r="14.5" fill="#6cc35f"/><path d="M6.6,14.6 L12.2,19.8 L22.3,9.7" stroke="#fff" stroke-width="3.4" fill="none" stroke-linejoin="miter"/></svg><svg style="position:absolute;left:1303.75px;top:992.7px;" width="14.6" height="14.6" viewBox="0 0 29 29"><circle cx="14.5" cy="14.5" r="14.5" fill="#6cc35f"/><path d="M6.6,14.6 L12.2,19.8 L22.3,9.7" stroke="#fff" stroke-width="3.4" fill="none" stroke-linejoin="miter"/></svg><svg style="position:absolute;left:1322.8px;top:992.7px;" width="14.6" height="14.6" viewBox="0 0 29 29"><circle cx="14.5" cy="14.5" r="14.5" fill="#6cc35f"/><path d="M6.6,14.6 L12.2,19.8 L22.3,9.7" stroke="#fff" stroke-width="3.4" fill="none" stroke-linejoin="miter"/></svg><svg style="position:absolute;left:1341.85px;top:992.7px;" width="14.6" height="14.6" viewBox="0 0 29 29"><circle cx="14.5" cy="14.5" r="14.5" fill="#6cc35f"/><path d="M6.6,14.6 L12.2,19.8 L22.3,9.7" stroke="#fff" stroke-width="3.4" fill="none" stroke-linejoin="miter"/></svg><svg style="position:absolute;left:1360.9px;top:992.7px;" width="14.6" height="14.6" viewBox="0 0 29 29"><circle cx="14.5" cy="14.5" r="14.5" fill="#6cc35f"/><path d="M6.6,14.6 L12.2,19.8 L22.3,9.7" stroke="#fff" stroke-width="3.4" fill="none" stroke-linejoin="miter"/></svg><svg style="position:absolute;left:1379.95px;top:992.7px;" width="14.6" height="14.6" viewBox="0 0 29 29"><circle cx="14.5" cy="14.5" r="14.5" fill="#6cc35f"/><path d="M6.6,14.6 L12.2,19.8 L22.3,9.7" stroke="#fff" stroke-width="3.4" fill="none" stroke-linejoin="miter"/></svg><svg style="position:absolute;left:1399.0px;top:992.7px;" width="14.6" height="14.6" viewBox="0 0 29 29"><circle cx="14.5" cy="14.5" r="14.5" fill="#6cc35f"/><path d="M6.6,14.6 L12.2,19.8 L22.3,9.7" stroke="#fff" stroke-width="3.4" fill="none" stroke-linejoin="miter"/></svg><div style="position:absolute;left:0px;top:0px;width:232px;height:995px;background:#0f1a2e"></div><div style="position:absolute;left:231px;top:3px;width:1px;height:992px;background:#2a2e3e"></div><div style="position:absolute;left:16px;top:64.75px;width:199px;height:2.25px;background:#e2614a"></div><div style="position:absolute;left:16px;top:83px;width:199px;height:53px;background:#151824;border:1px solid #4f5162;border-radius:4px"></div><div style="position:absolute;left:16px;top:400px;width:199px;height:40px;background:#1f2a44;border-radius:4px"></div><div style="position:absolute;left:0px;top:863px;width:231px;height:7px;background:linear-gradient(to bottom, rgba(5,8,15,0) 0%, rgba(5,8,15,0.85) 100%)"></div><div style="position:absolute;left:0px;top:870px;width:231px;height:1.25px;background:#3a3f4f"></div><svg style="position:absolute;left:0;top:0" width="232" height="995" viewBox="0 0 464 1990"><defs><linearGradient id="lg" x1="0" y1="1" x2="1" y2="0"><stop offset="0" stop-color="#f3a184"/><stop offset="1" stop-color="#e05c38"/></linearGradient></defs><g transform="translate(33,44)"><path d="M1.5,0 H60.5 Q62,0 62,1.5 V17 C61.5,37 48,54 31.2,63.3 C14,54 0.5,37 0,17 V1.5 Q0,0 1.5,0 Z" fill="url(#lg)"/><g stroke="#0f1a2e" stroke-width="4.4" fill="none"><line x1="-2" y1="20.5" x2="11.5" y2="22.8"/><line x1="22.5" y1="21" x2="32.5" y2="15.5"/><line x1="21.5" y1="28" x2="30.5" y2="37.5"/><circle cx="37.9" cy="12.8" r="6.25"/><circle cx="17.1" cy="24" r="6.05"/><circle cx="35.4" cy="42.5" r="6.85"/></g></g><circle cx="381.8" cy="65.2" r="3.6" fill="#6e7087"/><circle cx="393.2" cy="65.2" r="3.6" fill="#6e7087"/><circle cx="404.8" cy="65.2" r="3.6" fill="#6e7087"/><circle cx="381.8" cy="76.6" r="3.6" fill="#6e7087"/><circle cx="393.2" cy="76.6" r="3.6" fill="#6e7087"/><circle cx="404.8" cy="76.6" r="3.6" fill="#6e7087"/><circle cx="381.8" cy="88.0" r="3.6" fill="#6e7087"/><circle cx="393.2" cy="88.0" r="3.6" fill="#6e7087"/><circle cx="404.8" cy="88.0" r="3.6" fill="#6e7087"/><g stroke="#6b6d85" stroke-width="1.6" fill="none" stroke-linejoin="round"><path d="M70,189.8 L79.2,194.6 V203.8 L70,208.6 L60.8,203.8 V194.6 Z"/><path d="M60.5,194.5 L70,199.5 L79.5,194.5 M70,199.5 V209 M65,192 L74.5,197"/><path d="M63,201 L66.5,202.8" /></g><path d="M391.5,210.5 L400.2,219 L391.5,227.5" stroke="#6e7087" stroke-width="3.8" fill="none"/><g stroke="#6b6d85" fill="none" stroke-width="3"><path d="M50.5,346.5 L68.2,328.5 L85.8,346.5 H79 V359 H57.3 V346.5 Z"/><rect x="65" y="346.5" width="6.5" height="6.5"/></g><g stroke="#6b6d85" fill="none" stroke-width="2.5"><ellipse cx="67.5" cy="498.3" rx="14.8" ry="3.4"/><path d="M52.7,498.5 L55.3,519.5 Q56,523.2 67.5,523.2 Q79,523.2 79.7,519.5 L82.3,498.5"/><path d="M63,506.8 L59,510.8 L63,514.8 M72.2,506.8 L76.2,510.8 L72.2,514.8 M68.8,506 L66.4,515.6"/></g><g stroke="#6b6d85" fill="none" stroke-width="2" stroke-linejoin="round"><path d="M67.9,575.8 L82.3,584 V599.5 L68.5,607.4 L54.1,599.5 V584 Z"/><path d="M54.1,584 L68.5,592.3 L82.3,584 M68.5,592.3 V607.4 M61.2,579.8 L75.6,588.2"/></g><g stroke="#6b6d85" fill="none" stroke-width="2.6"><path d="M67.8,676 C64,669 59.5,667.5 56,667.5 C51.5,667.5 49.5,671.5 49.5,676 C49.5,680.5 51.5,684.3 56,684.3 C59.5,684.3 64,683 67.8,676 C71.6,669 76,667.5 79.5,667.5 C84,667.5 86.3,671.5 86.3,676 C86.3,680.5 84,684.3 79.5,684.3 C76,684.3 71.6,683 67.8,676 Z"/></g><g stroke="#67c5f5" fill="none" stroke-width="2"><path d="M69.8,832.3 V824.3 H53.3 V855.2 H78 M69.8,824.3 L78.2,832.5 V840.5 M69.8,832.3 H78.2"/><path d="M56,832.3 H66.5 M56,836.5 H74.8 M56,840.6 H70.5 M56,844.8 H66.5 M56,849 H66.5"/><circle cx="73.9" cy="846.8" r="4.6"/><path d="M77.2,850.2 L82.6,855.4"/></g><g stroke="#6b6d85" fill="none"><rect x="53" y="909.1" width="29.9" height="32.7" stroke-width="4"/><rect x="61.4" y="905.5" width="13.2" height="8.7" stroke-width="3" fill="#0f1a2e"/><path d="M60.3,928.4 L66.5,934.2 L76.5,924.2" stroke-width="3.6"/></g><g stroke="#6b6d85" fill="none" stroke-width="2.5" stroke-linejoin="round"><path d="M81.1,1005.7 V998.5 L66.7,990.7 L52.8,998.5 V1014.6 L66.7,1022"/><path d="M52.8,998.5 L66.7,1006.7 L81.1,998.5 M66.7,991.5 V1004.5 M66.7,1006.7 V1018"/><rect x="-7" y="-4.6" width="14" height="9.2" rx="4.6" transform="translate(76.4,1018.2) rotate(-45)"/><path d="M74.3,1018 L76.8,1015.5 M76.3,1020 L78.8,1017.5" stroke-width="1.6"/></g><g stroke="#6b6d85" fill="none" stroke-width="1.8" stroke-linejoin="round"><path d="M59.9,1168.2 L64.9,1173.2 L59.9,1178.2 L54.9,1173.2 Z"/><path d="M68.5,1168.5 Q72,1163.5 77.5,1159.5 M73.5,1159.3 H77.8 V1163.6"/><path d="M68.3,1173.2 H82.2 M79.2,1170.2 L82.4,1173.2 L79.2,1176.2"/><path d="M68.7,1178 Q72,1183 77.5,1187 M77.8,1182.8 V1187.2 H73.5"/></g><g stroke="#6b6d85" fill="none" stroke-width="2"><rect x="51.2" y="1246" width="13.6" height="6.8" rx="1"/><rect x="71.2" y="1246" width="13.6" height="6.8" rx="1"/><rect x="71.2" y="1259.2" width="13.6" height="6.8" rx="1"/><path d="M64.8,1249.6 H71.2 M58.3,1252.8 V1258 Q58.3,1262.5 62.8,1262.5 H71.2"/></g><rect x="32" y="1341" width="398" height="2" fill="#383c4b"/><rect x="32" y="1498.5" width="398" height="2" fill="#383c4b"/><g stroke="#6b6d85" fill="none" stroke-width="3"><path d="M79.27,1416.97 L82.93,1419.55 L79.67,1425.21 L75.61,1423.33 L71.67,1425.60 L71.26,1430.06 L64.74,1430.06 L64.33,1425.60 L60.39,1423.33 L56.33,1425.21 L53.07,1419.55 L56.73,1416.97 L56.73,1412.43 L53.07,1409.85 L56.33,1404.19 L60.39,1406.07 L64.33,1403.80 L64.74,1399.34 L71.26,1399.34 L71.67,1403.80 L75.61,1406.07 L79.67,1404.19 L82.93,1409.85 L79.27,1412.43 Z" stroke-linejoin="round"/><circle cx="68.0" cy="1414.7" r="5.6"/></g><path d="M390,1406.5 L399,1415.2 L390,1424" stroke="#8e90a6" stroke-width="2.4" fill="none"/><g stroke="#6b6d85" fill="none" stroke-width="2.2"><path d="M80.08,1565.39 L81.81,1566.67 L80.15,1569.55 L78.17,1568.70 L76.11,1569.89 L75.86,1572.03 L72.54,1572.03 L72.29,1569.89 L70.23,1568.70 L68.25,1569.55 L66.59,1566.67 L68.32,1565.39 L68.32,1563.01 L66.59,1561.73 L68.25,1558.85 L70.23,1559.70 L72.29,1558.51 L72.54,1556.37 L75.86,1556.37 L76.11,1558.51 L78.17,1559.70 L80.15,1558.85 L81.81,1561.73 L80.08,1563.01 Z" stroke-linejoin="round"/><circle cx="74.2" cy="1564.2" r="3"/></g><g stroke="#6b6d85" fill="none" stroke-width="3" stroke-linejoin="miter"><path d="M61,1561.5 L51.5,1566.5 L66.5,1574"/><path d="M82.5,1580.8 L67,1588.8 L51.5,1580.8 L59,1576.8"/></g><path d="M51.5,1573.6 L59,1569.6 L73,1576.4 L82.5,1573.6 L67,1581.8 Z" fill="#6b6d85"/><g stroke="#6b6d85" fill="none" stroke-width="2.2"><path d="M80.08,1649.39 L81.81,1650.67 L80.15,1653.55 L78.17,1652.70 L76.11,1653.89 L75.86,1656.03 L72.54,1656.03 L72.29,1653.89 L70.23,1652.70 L68.25,1653.55 L66.59,1650.67 L68.32,1649.39 L68.32,1647.01 L66.59,1645.73 L68.25,1642.85 L70.23,1643.70 L72.29,1642.51 L72.54,1640.37 L75.86,1640.37 L76.11,1642.51 L78.17,1643.70 L80.15,1642.85 L81.81,1645.73 L80.08,1647.01 Z" stroke-linejoin="round"/><circle cx="74.2" cy="1648.2" r="3"/><path d="M61.8,1645.3 H55.6 V1654 H63.5 M59.7,1654 V1659.6 M53,1659.6 H78.2 M57,1659.6 V1664.5 M74.2,1659.6 V1664.5"/><rect x="51.2" y="1664.5" width="11.8" height="9.6"/><rect x="68.4" y="1664.5" width="11.8" height="9.6"/></g><g stroke="#7d7f97" fill="none" stroke-width="2"><circle cx="400" cy="1573" r="13"/></g><rect x="398.9" y="1570" width="2.3" height="9.6" fill="#7d7f97"/><circle cx="400.05" cy="1567.1" r="1.5" fill="#7d7f97"/><g stroke="#7d7f97" fill="none" stroke-width="2"><circle cx="400" cy="1657" r="13"/></g><rect x="398.9" y="1654" width="2.3" height="9.6" fill="#7d7f97"/><circle cx="400.05" cy="1651.1" r="1.5" fill="#7d7f97"/></svg><svg style="position:absolute;left:26px;top:901px;" width="18" height="16.5" viewBox="52 1801 36 33"><path d="M55.8,1802.1 H77.1 Q80.1,1802.1 80.1,1805.1 V1819.6 Q80.1,1822.6 77.1,1822.6 H62.2 L57.5,1827 L56.4,1822.6 Q52.8,1822.6 52.8,1819.6 V1805.1 Q52.8,1802.1 55.8,1802.1 Z" fill="#6b6d85"/><path d="M62.8,1809.3 Q63.5,1806 66.6,1806 Q69.7,1806 69.7,1808.7 Q69.7,1810.4 67.7,1811.6 Q66.4,1812.5 66.4,1814.5" stroke="#0f1a2e" stroke-width="2.6" fill="none"/><circle cx="66.3" cy="1818" r="1.6" fill="#0f1a2e"/><path d="M83.2,1813.5 H85.7 V1829 H81.2 L84,1832.5 M80.5,1829 H65.5 Q63.6,1829 63.6,1827 V1825" stroke="#6b6d85" stroke-width="2.5" fill="none"/></svg><svg style="position:absolute;left:220px;top:889px;" width="12" height="55" viewBox="440 1778 24 110"><path d="M464,1778.5 V1888.5 L441,1858.5 V1808.5 Z" fill="#b0b3c6"/><path d="M458,1826 V1841 L444.5,1833.5 Z" fill="#0f1a2e"/></svg><div style="position:absolute;left:25px;top:951px;width:24px;height:24px;background:#6cc55f;border:1px solid #fff;border-radius:50%"></div><div class="t" style="left:33.40px;top:958.19px;font-size:11px;color:#ffffff;font-weight:700;letter-spacing:0.000px;">L</div><div class="t" style="left:56.25px;top:23.33px;font-size:13.2px;color:#ffffff;font-weight:700;letter-spacing:-0.161px;">Supply Chain</div><div class="t" style="left:56.25px;top:39.33px;font-size:13.2px;color:#ffffff;font-weight:700;letter-spacing:-0.042px;">Security</div><div class="t" style="left:45.25px;top:95.97px;font-size:8.3px;color:#9293ab;font-weight:700;letter-spacing:0.010px;">PROJECT</div><div class="t" style="left:29.50px;top:109.36px;font-size:13.75px;color:#ffffff;font-weight:400;letter-spacing:0.164px;-webkit-text-stroke:0.35px currentColor;">Repo Posture Manage...</div><div class="t" style="left:52.50px;top:164.86px;font-size:13.75px;color:#c3c4d3;font-weight:400;letter-spacing:0.017px;">Get Started</div><div class="t" style="left:32.25px;top:214.95px;font-size:10.4px;color:#8b8ea3;font-weight:400;letter-spacing:-0.274px;">SUPPLY CHAIN</div><div class="t" style="left:52.50px;top:246.86px;font-size:13.75px;color:#c3c4d3;font-weight:400;letter-spacing:-0.102px;">Code Repositories</div><div class="t" style="left:52.50px;top:288.86px;font-size:13.75px;color:#c3c4d3;font-weight:400;letter-spacing:0.197px;">Artifacts</div><div class="t" style="left:52.50px;top:331.11px;font-size:13.75px;color:#c3c4d3;font-weight:400;letter-spacing:-0.509px;">CI/CD</div><div class="t" style="left:32.25px;top:380.70px;font-size:10.4px;color:#8b8ea3;font-weight:400;letter-spacing:-0.326px;">RISK AND COMPLIANCE</div><div class="t" style="left:52.50px;top:412.86px;font-size:13.75px;color:#67c5f5;font-weight:400;letter-spacing:-0.012px;-webkit-text-stroke:0.35px currentColor;">Compliance</div><div class="t" style="left:52.50px;top:454.86px;font-size:13.75px;color:#c3c4d3;font-weight:400;letter-spacing:-0.121px;">Rule Definitions</div><div class="t" style="left:52.50px;top:497.11px;font-size:13.75px;color:#c3c4d3;font-weight:400;letter-spacing:-0.076px;">Remediation Tracker</div><div class="t" style="left:32.25px;top:546.70px;font-size:10.4px;color:#8b8ea3;font-weight:400;letter-spacing:-0.559px;">MANAGE</div><div class="t" style="left:52.50px;top:579.36px;font-size:13.75px;color:#c3c4d3;font-weight:400;letter-spacing:0.036px;">Integrations</div><div class="t" style="left:52.50px;top:621.36px;font-size:13.75px;color:#c3c4d3;font-weight:400;letter-spacing:-0.227px;">Pipelines</div><div class="t" style="left:52.50px;top:700.26px;font-size:13.75px;color:#c3c4d3;font-weight:400;letter-spacing:0.039px;">Project Settings</div><div class="t" style="left:52.50px;top:779.36px;font-size:13.75px;color:#c3c4d3;font-weight:400;letter-spacing:0.081px;">Account Settings</div><div class="t" style="left:52.50px;top:821.36px;font-size:13.75px;color:#c3c4d3;font-weight:400;letter-spacing:0.002px;">Organization Settings</div><div class="t" style="left:52.50px;top:900.11px;font-size:13.75px;color:#c3c4d3;font-weight:400;letter-spacing:-0.394px;">Help</div><div class="t" style="left:54.50px;top:955.86px;font-size:13.75px;color:#c3c4d3;font-weight:400;letter-spacing:-0.161px;">Lavakush</div></div></body></html>
